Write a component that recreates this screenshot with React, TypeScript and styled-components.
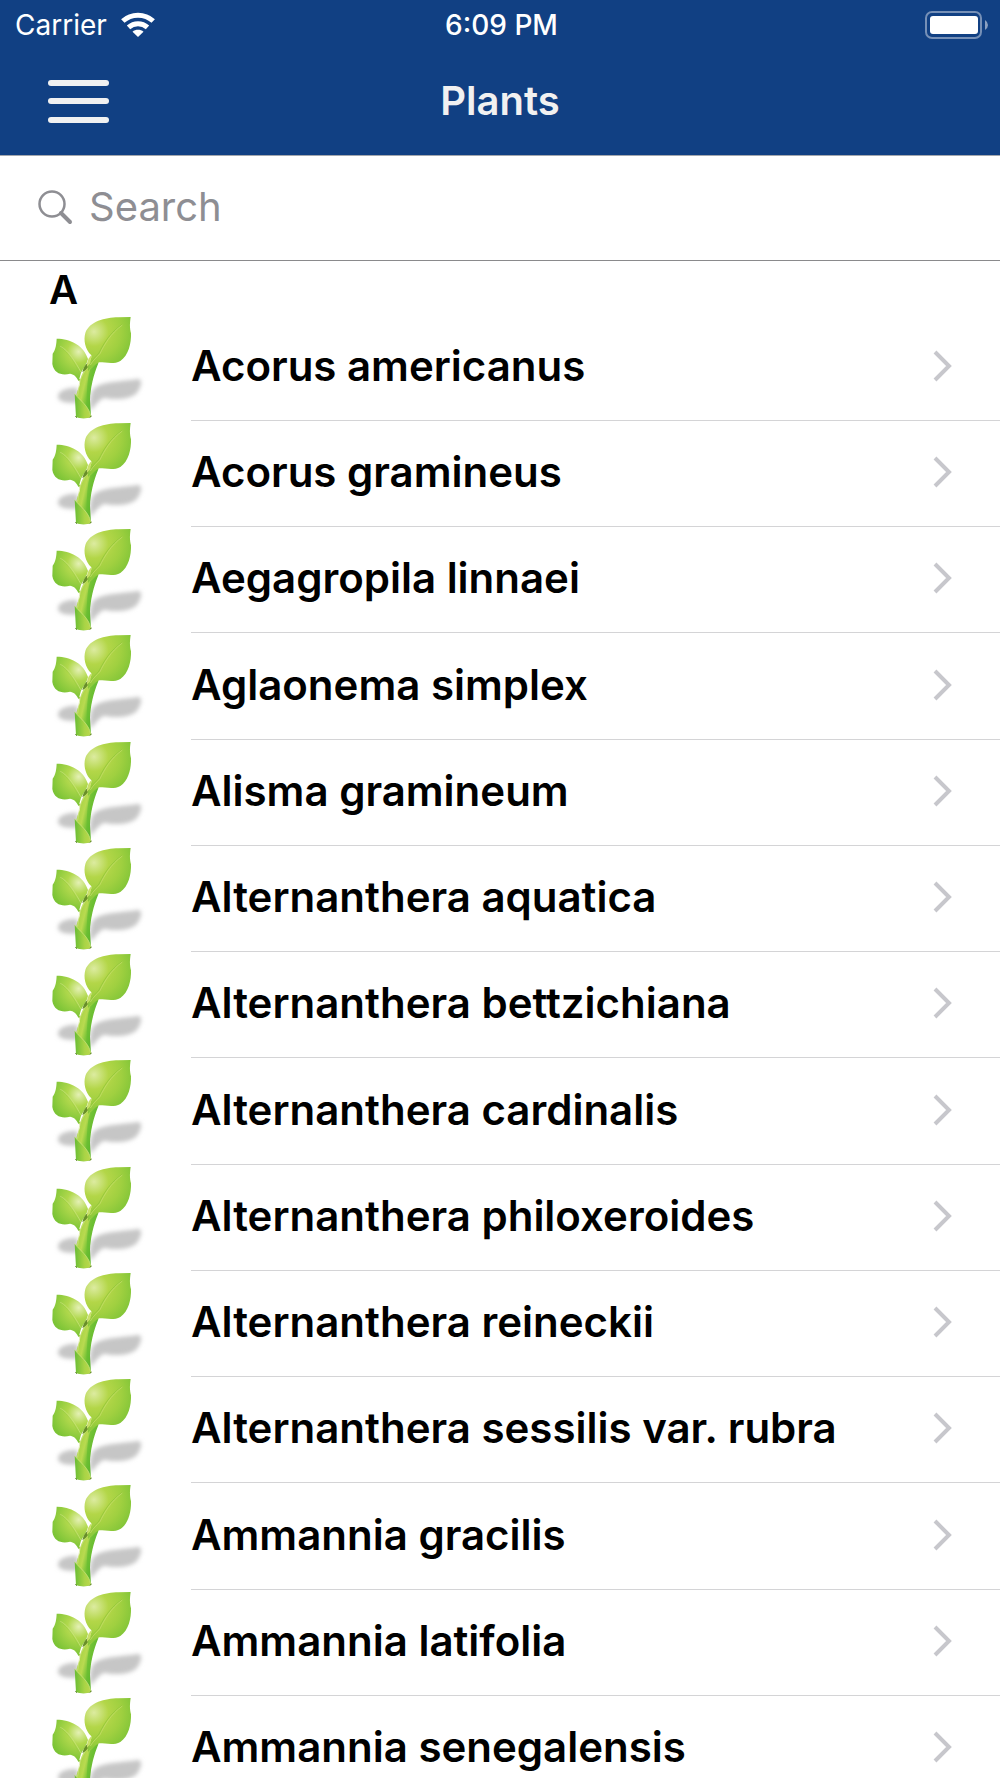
import React from "react";
import styled, { createGlobalStyle } from "styled-components";

const GlobalStyle = createGlobalStyle`
  *, *::before, *::after { box-sizing: border-box; }
  body { margin: 0; background: #fff; }
`;

const Screen = styled.div`
  display: flex;
  flex-direction: column;
  height: 100vh;
  overflow: hidden;
  background: #fff;
  color: #000;
  font-family: Inter, "Liberation Sans", sans-serif;
`;

const Header = styled.header`
  flex: none;
  padding-bottom: 3px;
  background: #114083;
  border-bottom: 1px solid #a3a7ae;
  color: #fff;
`;

const Bar = styled.div<{ $height: number; $left: number; $right: number }>`
  display: grid;
  grid-template-columns: 1fr auto 1fr;
  align-items: center;
  height: ${(p) => p.$height}px;
  padding: 0 ${(p) => p.$right}px 0 ${(p) => p.$left}px;
`;

const Network = styled.div`
  display: flex;
  align-items: center;
  gap: 14px;
  font-size: 28px;
  line-height: 36px;
`;

const Time = styled.time`
  font-size: 28px;
  line-height: 36px;
  font-weight: 500;
`;

const Battery = styled.svg`
  justify-self: end;
  display: block;
`;

const MenuButton = styled.button`
  display: flex;
  flex-direction: column;
  justify-content: space-between;
  justify-self: start;
  width: 61px;
  height: 43px;
  padding: 0;
  border: 0;
  background: none;
  cursor: pointer;
`;

const MenuLine = styled.span`
  height: 6px;
  border-radius: 3px;
  background: #f1f1f1;
`;

const Title = styled.h1`
  margin: 0;
  color: #f1f1f1;
  font-size: 40px;
  line-height: 48px;
  font-weight: 600;
`;

const SearchBar = styled.label`
  display: flex;
  flex: none;
  align-items: center;
  gap: 16px;
  height: 105px;
  padding: 0 38px 2px;
  border-bottom: 1px solid #8a8a8c;
`;

const SearchInput = styled.input`
  flex: 1;
  min-width: 0;
  padding: 0;
  border: 0;
  outline: 0;
  background: none;
  font: 400 40px/48px Inter, "Liberation Sans", sans-serif;
  &::placeholder { color: #8e8e93; opacity: 1; }
`;

const Content = styled.main`
  flex: 1;
  min-height: 0;
  overflow-y: auto;
  scrollbar-width: none;
`;

const SectionTitle = styled.h2`
  margin: 0;
  padding: 5px 49px 1px;
  font-size: 40px;
  line-height: 48px;
  font-weight: 600;
`;

const List = styled.ul`
  margin: 0;
  padding: 0;
  list-style: none;
`;

const Row = styled.li`
  height: 106px;
  &:nth-child(4n) { height: 107px; }
`;

const RowLink = styled.a`
  display: flex;
  height: 100%;
  padding-left: 50px;
  color: inherit;
  text-decoration: none;
`;

const RowBody = styled.span`
  display: flex;
  flex: 1;
  align-items: center;
  justify-content: space-between;
  min-width: 0;
  margin-left: 45px;
  padding: 0 47px 3px 0;
  border-bottom: 1px solid #d4d4d6;
`;

const Name = styled.span`
  font-size: 42px;
  line-height: 52px;
  font-weight: 600;
  white-space: nowrap;
`;

const plants = [
  "Acorus americanus",
  "Acorus gramineus",
  "Aegagropila linnaei",
  "Aglaonema simplex",
  "Alisma gramineum",
  "Alternanthera aquatica",
  "Alternanthera bettzichiana",
  "Alternanthera cardinalis",
  "Alternanthera philoxeroides",
  "Alternanthera reineckii",
  "Alternanthera sessilis var. rubra",
  "Ammannia gracilis",
  "Ammannia latifolia",
  "Ammannia senegalensis",
];

const HiddenSvg = styled.svg`
  display: block;
`;

const SproutDefs = () => (
  <HiddenSvg width="0" height="0" aria-hidden="true">
    <defs>
      <radialGradient id="leafLarge" gradientUnits="userSpaceOnUse" cx="192" cy="92" r="125">
        <stop offset="0" stopColor="#dcebA0" />
        <stop offset="0.35" stopColor="#b3d648" />
        <stop offset="0.65" stopColor="#a0d040" />
        <stop offset="1" stopColor="#7fc437" />
      </radialGradient>
      <radialGradient id="leafSmall" gradientUnits="userSpaceOnUse" cx="146" cy="152" r="85">
        <stop offset="0" stopColor="#e4f0b4" />
        <stop offset="0.4" stopColor="#b0d84c" />
        <stop offset="1" stopColor="#7cc436" />
      </radialGradient>
      <linearGradient id="stem" gradientUnits="userSpaceOnUse" x1="140" y1="250" x2="190" y2="262">
        <stop offset="0" stopColor="#a3d140" />
        <stop offset="0.45" stopColor="#b9da50" />
        <stop offset="0.7" stopColor="#83c83b" />
        <stop offset="1" stopColor="#5db52e" />
      </linearGradient>
      <linearGradient id="sheath" x1="0" y1="0" x2="1" y2="0">
        <stop offset="0" stopColor="#69bd33" />
        <stop offset="0.6" stopColor="#a9d446" />
        <stop offset="1" stopColor="#bcd84e" />
      </linearGradient>
      <filter id="soft" x="-20%" y="-30%" width="140%" height="160%">
        <feGaussianBlur stdDeviation="6" />
      </filter>
    </defs>
  </HiddenSvg>
);

const Sprout = () => (
  <svg width="96" height="106" viewBox="60 42 288 318" aria-hidden="true">
    <g fill="#c6c6c6" filter="url(#soft)">
      <path d="M84 288C84 268 108 260 142 260L148 304C118 308 87 305 84 288Z" />
      <path d="M180 322C180 296 178 268 202 255C236 240 292 240 322 234C340 233 334 256 322 274C306 296 252 298 222 290C206 298 194 314 184 328Z" />
    </g>
    <path d="M144 232C150 240 151 247 149 253C144 264 141 274 139 284L139 347Q160 356 183 347L180 296C181 262 191 220 205 187L187 166C180 188 160 206 151 235Z" fill="url(#stem)" />
    <path d="M181 205C170 239 172 269 169 314L180 323C177 275 185 228 202 190Z" fill="#65bd31" opacity=".65" />
    <path d="M174 199C149 224 147 254 143 284" stroke="#d5e791" strokeWidth="2" fill="none" />
    <path d="M134 278C150 299 176 314 182 344L184 348Q160 356 138 348Z" fill="url(#sheath)" />
    <path d="M134 278C150 299 176 314 182 344" fill="none" stroke="#d3e787" strokeWidth="2" />
    <path d="M136 346l5 4M179 349l6-4" stroke="#577d27" strokeWidth="3" />
    <path d="M80 113C122 113 162 134 174 174C171 190 160 203 153 215L146 241C140 226 130 219 120 218C98 224 72 219 67 189L68 158C78 144 79 129 80 113Z" fill="url(#leafSmall)" />
    <path d="M91 136C119 151 136 184 153 213" fill="none" stroke="#cfe584" strokeWidth="2" />
    <path d="M94 139C114 157 130 178 145 209" fill="none" stroke="#8fc540" strokeWidth="1" />
    <path d="M302 48C299 69 299 79 303 97C304 126 296 164 271 180C251 191 228 184 208 184C194 192 181 201 174 210L173 187C180 180 185 174 184 163C165 145 160 116 166 96C179 61 224 50 265 49Z" fill="url(#leafLarge)" />
    <path d="M277 70C240 94 220 129 207 156C198 167 188 175 179 190" fill="none" stroke="#8dc236" strokeWidth="2" />
    <path d="M277 72C242 97 223 132 210 158C200 169 189 178 181 192" fill="none" stroke="#c8e070" strokeWidth="2" />
    <path d="M174 185C163 192 160 204 157 214C165 209 173 203 175 194Z" fill="#688f28" />
    <path d="M184 163C176 171 170 181 171 198L181 186Z" fill="#c8df69" />
  </svg>
);

const Chevron = () => (
  <svg width="20" height="32" viewBox="0 0 20 32" aria-hidden="true">
    <path d="M2 2L16 16L2 30" fill="none" stroke="#c7c7cc" strokeWidth="4" />
  </svg>
);

const WifiIcon = () => (
  <svg width="34" height="26" viewBox="0 0 34 26" aria-hidden="true">
    <path d="M1.800 9C10.300 1.200 23.700 1.200 32.200 9M7.500 15.400C13 10.400 21 10.400 26.500 15.400" fill="none" stroke="#fff" strokeWidth="5" />
    <path d="M17 25L11.500 19.800C14.500 17.200 19.500 17.200 22.500 19.800Z" fill="#fff" />
  </svg>
);

export default function App() {
  return (
    <Screen>
      <GlobalStyle />
      <SproutDefs />
      <Header>
        <Bar $height={50} $left={15} $right={12}>
          <Network>
            Carrier
            <WifiIcon />
          </Network>
          <Time>6:09 PM</Time>
          <Battery width="63" height="28" viewBox="0 0 63 28" role="img" aria-label="Battery full">
            <rect x="1" y="1" width="55" height="26" rx="6" fill="none" stroke="#7690b7" strokeWidth="2" />
            <rect x="5" y="5" width="48" height="18" rx="3" fill="#fff" />
            <path d="M60 9Q63 11 63 14T60 19Z" fill="#8ba0c1" />
          </Battery>
        </Bar>
        <Bar as="nav" $height={102} $left={48} $right={48}>
          <MenuButton type="button" aria-label="Menu">
            <MenuLine />
            <MenuLine />
            <MenuLine />
          </MenuButton>
          <Title>Plants</Title>
        </Bar>
      </Header>
      <SearchBar>
        <svg width="35" height="35" viewBox="0 0 35 35" aria-hidden="true">
          <circle cx="14" cy="14" r="12.500" fill="none" stroke="#8e8e93" strokeWidth="2.500" />
          <path d="M23 23L32 32" stroke="#8e8e93" strokeWidth="4" strokeLinecap="round" />
        </svg>
        <SearchInput type="search" placeholder="Search" aria-label="Search" />
      </SearchBar>
      <Content>
        <SectionTitle>A</SectionTitle>
        <List>
          {plants.map((name) => (
            <Row key={name}>
              <RowLink href="#">
                <Sprout />
                <RowBody>
                  <Name>{name}</Name>
                  <Chevron />
                </RowBody>
              </RowLink>
            </Row>
          ))}
        </List>
      </Content>
    </Screen>
  );
}
